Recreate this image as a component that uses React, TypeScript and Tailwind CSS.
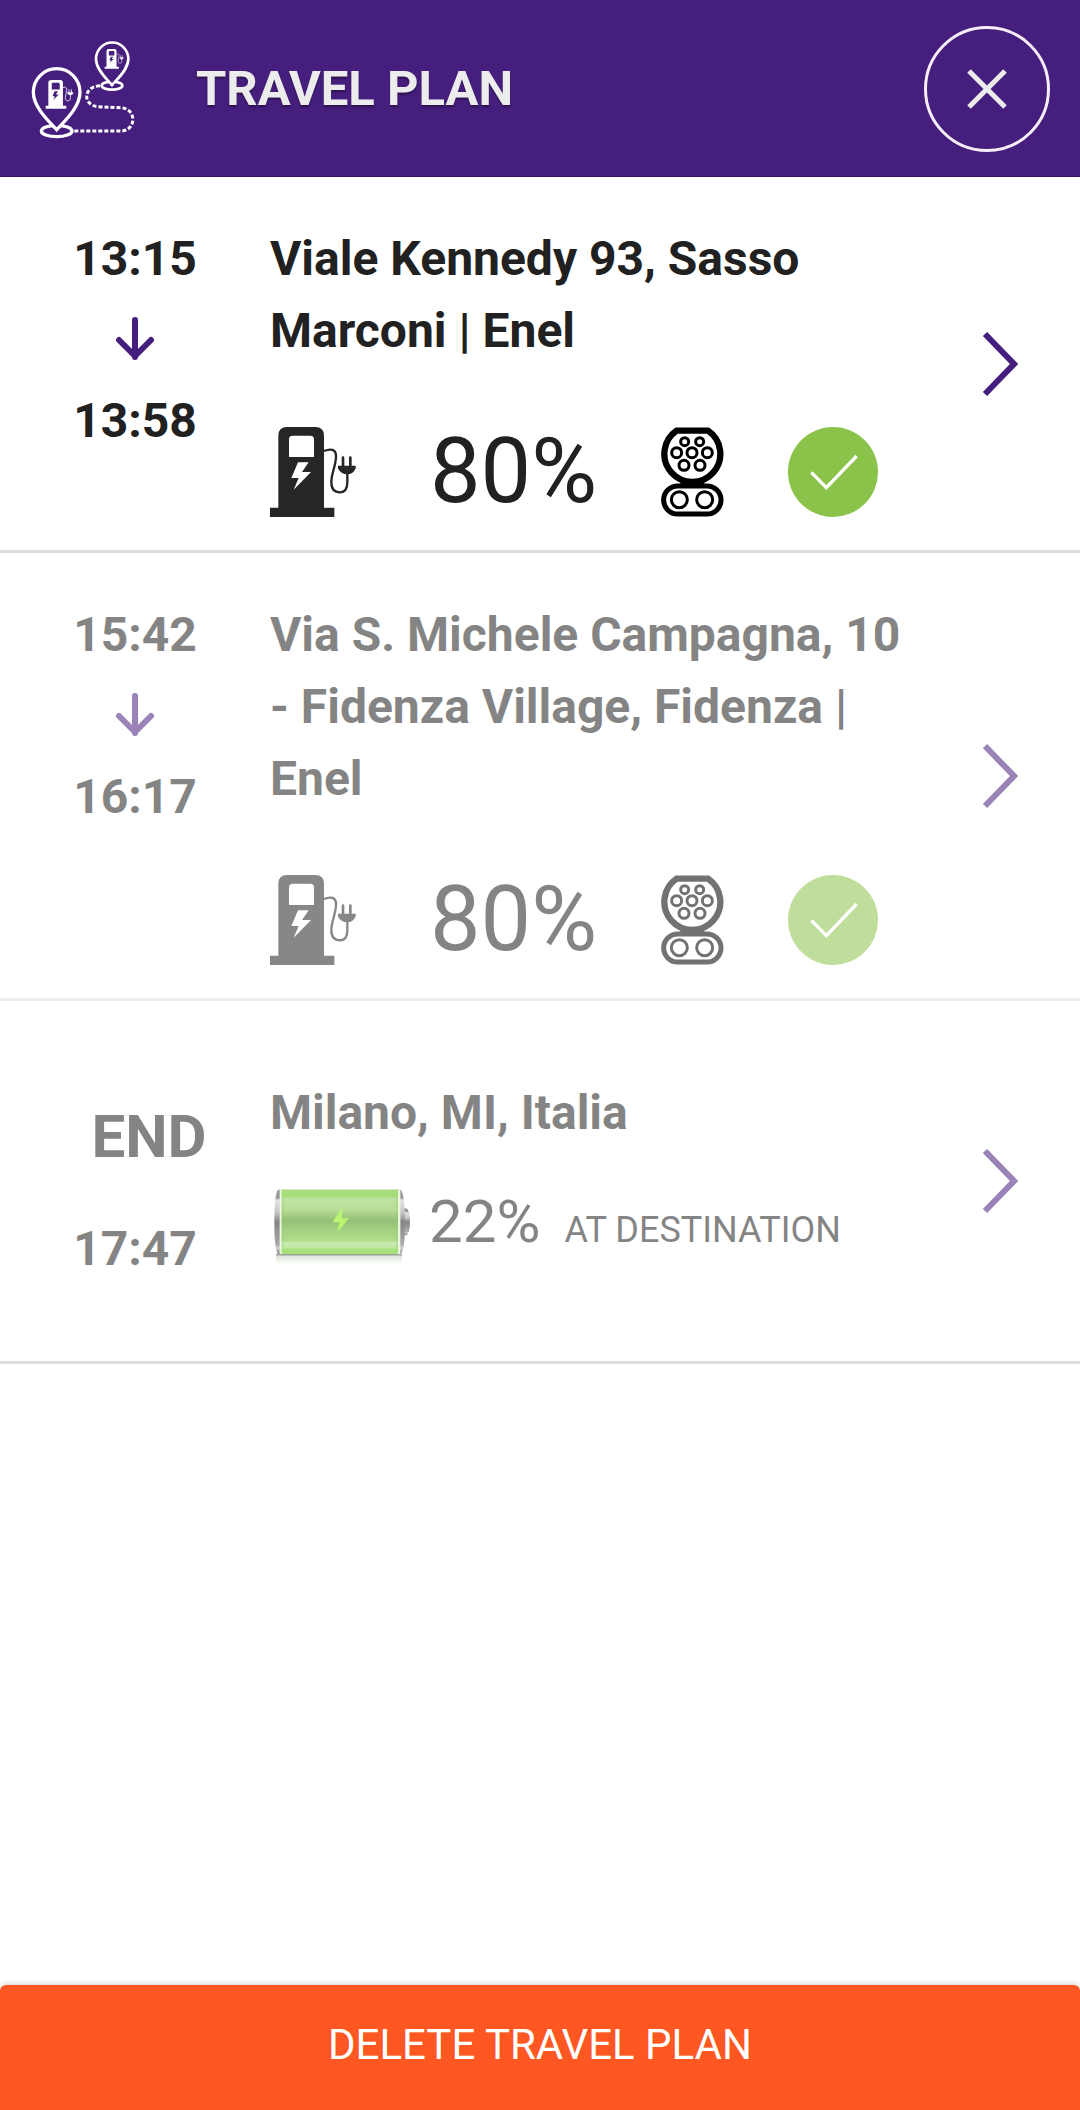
import * as React from "react";

interface Stop {
  arrival: string;
  departure: string;
  address: string;
  charge: number;
  faded?: boolean;
}

const stops: Stop[] = [
  {
    arrival: "13:15",
    departure: "13:58",
    address: "Viale Kennedy 93, Sasso Marconi | Enel",
    charge: 80,
  },
  {
    arrival: "15:42",
    departure: "16:17",
    address: "Via S. Michele Campagna, 10 - Fidenza Village, Fidenza | Enel",
    charge: 80,
    faded: true,
  },
];

const PumpShape = () => (
  <>
    <path
      fill="currentColor"
      fillRule="evenodd"
      d="M25 242V26Q25 0 51 0H136Q162 0 162 26V242H193V270H0V242ZM57 90H132V37Q132 26 121 26H68Q57 26 57 37ZM84 106 64 153H86L71 188 123 135H96L116 106Z"
    />
    <path
      fill="none"
      stroke="currentColor"
      strokeWidth="7"
      d="M162 72C182 64 198 66 198 88C198 116 184 138 184 166C184 188 196 196 210 196C226 196 232 184 232 166V138"
    />
    <path
      fill="none"
      stroke="currentColor"
      strokeWidth="8"
      strokeLinecap="round"
      d="M219 92V118M241 92V118"
    />
    <path fill="currentColor" d="M204 116H257V124Q250 142 232 142Q212 142 204 124Z" />
  </>
);

const PumpIcon = () => (
  <svg viewBox="0 0 258 270" className="h-[90px] w-[86px] text-[#262626]" aria-hidden="true">
    <PumpShape />
  </svg>
);

const RouteIcon = () => (
  <svg
    viewBox="30 30 318 300"
    className="h-[100px] w-[106px] shrink-0 text-white"
    fill="none"
    stroke="currentColor"
    aria-hidden="true"
  >
    <path
      strokeWidth="9"
      strokeDasharray="12 6"
      d="M163 306H306C350 302 350 238 302 236L232 233C188 226 188 174 240 170"
    />
    <ellipse cx="276" cy="170" rx="31" ry="12" strokeWidth="8" />
    <path
      fill="#461e7d"
      strokeWidth="8"
      d="M276 168C262 152 228 122 228 90A48 49 0 0 1 325 90C325 122 290 152 276 168Z"
    />
    <ellipse cx="110" cy="306" rx="46" ry="17" strokeWidth="10" />
    <path
      fill="#461e7d"
      strokeWidth="10"
      d="M110 302C90 280 40 236 40 190A70 71 0 0 1 180 190C180 236 130 280 110 302Z"
    />
    <g stroke="none" transform="translate(77 153) scale(.32)">
      <PumpShape />
    </g>
    <g stroke="none" transform="translate(254 60) scale(.22)">
      <PumpShape />
    </g>
  </svg>
);

const ConnectorIcon = () => (
  <svg
    viewBox="0 0 189 270"
    className="h-[90px] w-[63px] text-black"
    fill="none"
    stroke="currentColor"
    aria-hidden="true"
  >
    <path strokeWidth="19" d="M47 11H141A84 84 0 1 1 47 11Z" />
    <path fill="currentColor" stroke="none" d="M58 156H130V180H58Z" />
    <g strokeWidth="9">
      <circle cx="71" cy="44" r="12" />
      <circle cx="116" cy="44" r="12" />
      <circle cx="47" cy="77" r="15" />
      <circle cx="93" cy="77" r="15" />
      <circle cx="139" cy="77" r="15" />
      <circle cx="69" cy="115" r="15" />
      <circle cx="117" cy="115" r="15" />
      <circle cx="55" cy="218" r="24" />
      <circle cx="131" cy="218" r="24" />
    </g>
    <rect x="8" y="177" width="172" height="84" rx="42" strokeWidth="15" />
  </svg>
);

const CheckIcon = () => (
  <svg viewBox="0 0 270 270" className="size-[90px]" aria-label="Available" role="img">
    <circle cx="135" cy="135" r="135" fill="#8bc34a" />
    <path fill="none" stroke="#fff" strokeWidth="10" d="M70 136L115 182L206 87" />
  </svg>
);

const ArrowDown = () => (
  <svg
    viewBox="0 0 40 46"
    className="mx-auto mt-5 mb-6 h-[46px] w-10"
    fill="none"
    stroke="#461e7d"
    strokeWidth="6"
    strokeLinecap="round"
    strokeLinejoin="round"
    aria-hidden="true"
  >
    <path d="M20 5V42M4 25L20 41L36 25" />
  </svg>
);

const BatteryIcon = () => (
  <svg viewBox="0 0 435 270" className="h-[90px] w-[145px] shrink-0" aria-hidden="true">
    <defs>
      <linearGradient id="cell" x1="0" y1="0" x2="0" y2="1">
        <stop offset="0" stopColor="#5dc308" />
        <stop offset=".11" stopColor="#62c414" />
        <stop offset=".14" stopColor="#8ccc58" />
        <stop offset=".3" stopColor="#80c442" />
        <stop offset=".48" stopColor="#3f8c06" />
        <stop offset=".62" stopColor="#5aac1c" />
        <stop offset=".79" stopColor="#72c42c" />
        <stop offset=".82" stopColor="#9cdc70" />
        <stop offset=".89" stopColor="#90d860" />
        <stop offset=".92" stopColor="#62c818" />
        <stop offset="1" stopColor="#5dc308" />
      </linearGradient>
      <linearGradient id="metal" x1="0" y1="0" x2="0" y2="1">
        <stop offset="0" stopColor="#4a4a4a" />
        <stop offset=".13" stopColor="#444" />
        <stop offset=".16" stopColor="#ccc" />
        <stop offset=".35" stopColor="#999" />
        <stop offset=".5" stopColor="#222" />
        <stop offset=".85" stopColor="#666" />
        <stop offset=".9" stopColor="#aaa" />
        <stop offset="1" stopColor="#222" />
      </linearGradient>
      <linearGradient id="mirror" x1="0" y1="0" x2="0" y2="1">
        <stop offset="0" stopColor="#222" />
        <stop offset=".2" stopColor="#6a8a58" stopOpacity=".4" />
        <stop offset="1" stopColor="#9c8" stopOpacity="0" />
      </linearGradient>
    </defs>
    <path
      fill="url(#metal)"
      d="M395 82H409Q420 90 420 122Q420 155 409 163H395Z"
    />
    <path
      fill="url(#metal)"
      d="M24 26H392Q405 40 405 125Q405 205 392 220H24Q13 205 13 125Q13 40 24 26Z"
    />
    <path fill="#d8f4bc" d="M29 26H391V220H29Z" />
    <path fill="url(#cell)" d="M35 26H384V220H35Z" />
    <path fill="#3d8c10" fillOpacity=".25" d="M35 48H42V200H35ZM377 48H384V200H377Z" />
    <path fill="#80ee00" d="M218 78L187 124H208L203 153L237 112H215Z" />
    <path fill="url(#mirror)" d="M18 220H396V252H18Z" />
  </svg>
);

const DetailsButton = ({ label }: { label: string }) => (
  <div className="flex w-40 shrink-0 items-center justify-center">
    <button type="button" aria-label={label} className="cursor-pointer">
      <svg
        viewBox="0 0 36 66"
        className="h-[66px] w-9"
        fill="none"
        stroke="#461e7d"
        strokeWidth="6"
        aria-hidden="true"
      >
        <path d="M3 3L32 33L3 63" />
      </svg>
    </button>
  </div>
);

const StopRow = ({ arrival, departure, address, charge, faded }: Stop) => (
  <li className={`flex border-b-3 border-[#dedede] ${faded ? "opacity-55" : ""}`}>
    <div className="w-1/4 shrink-0 pt-[46px] text-center font-bold">
      <p>{arrival}</p>
      <ArrowDown />
      <p>{departure}</p>
    </div>
    <div className="min-w-0 flex-1 pt-[46px] pb-[33px]">
      <h2 className="font-bold">{address}</h2>
      <div className="mt-[60px] flex items-center">
        <div className="w-40 shrink-0">
          <PumpIcon />
        </div>
        <div className="flex items-center gap-16">
          <span className="text-[90px] leading-[90px]">{charge}%</span>
          <ConnectorIcon />
          <CheckIcon />
        </div>
      </div>
    </div>
    <DetailsButton label={`Details for ${address}`} />
  </li>
);

const App = () => (
  <div className="flex min-h-screen flex-col bg-white font-[Roboto,sans-serif] text-[48px] leading-[72px] text-[#212121]">
    <header className="flex items-center border-b border-[#35155f] bg-[#461e7d] px-[30px] pt-[26px] pb-6">
      <RouteIcon />
      <h1 className="ml-[60px] flex-1 text-[49px] font-bold text-[#ececec] [text-shadow:0_2px_2px_rgb(0_0_0/0.4)]">
        TRAVEL PLAN
      </h1>
      <button
        type="button"
        aria-label="Close"
        className="flex size-[126px] cursor-pointer items-center justify-center rounded-full border-3 border-[#f6eefa]"
      >
        <svg viewBox="0 0 40 40" className="size-10" stroke="#ececec" strokeWidth="5" aria-hidden="true">
          <path d="M2 2L38 38M38 2L2 38" />
        </svg>
      </button>
    </header>

    <main className="flex-1">
      <ul>
        {stops.map((stop) => (
          <StopRow key={stop.arrival} {...stop} />
        ))}
        <li className="border-b-3 border-[#dedede]">
          <div className="flex py-[76px] opacity-55">
            <div className="w-1/4 shrink-0 text-center font-bold">
              <p className="mt-6 pl-7 text-[60px]">END</p>
              <p className="mt-10">17:47</p>
            </div>
            <div className="min-w-0 flex-1">
              <h2 className="font-bold">Milano, MI, Italia</h2>
              <div className="mt-8 flex items-center gap-[14px]">
                <BatteryIcon />
                <p className="flex items-baseline gap-6">
                  <span className="text-[60px]">22%</span>
                  <span className="text-[36px]">AT DESTINATION</span>
                </p>
              </div>
            </div>
            <DetailsButton label="Details for Milano, MI, Italia" />
          </div>
        </li>
      </ul>
    </main>

    <button
      type="button"
      className="w-full cursor-pointer rounded-t-md bg-[#ff5722] pt-6 pb-[29px] text-[42px] text-white shadow-[0_0_6px_rgb(0_0_0/0.25)]"
    >
      DELETE TRAVEL PLAN
    </button>
  </div>
);

export default App;
